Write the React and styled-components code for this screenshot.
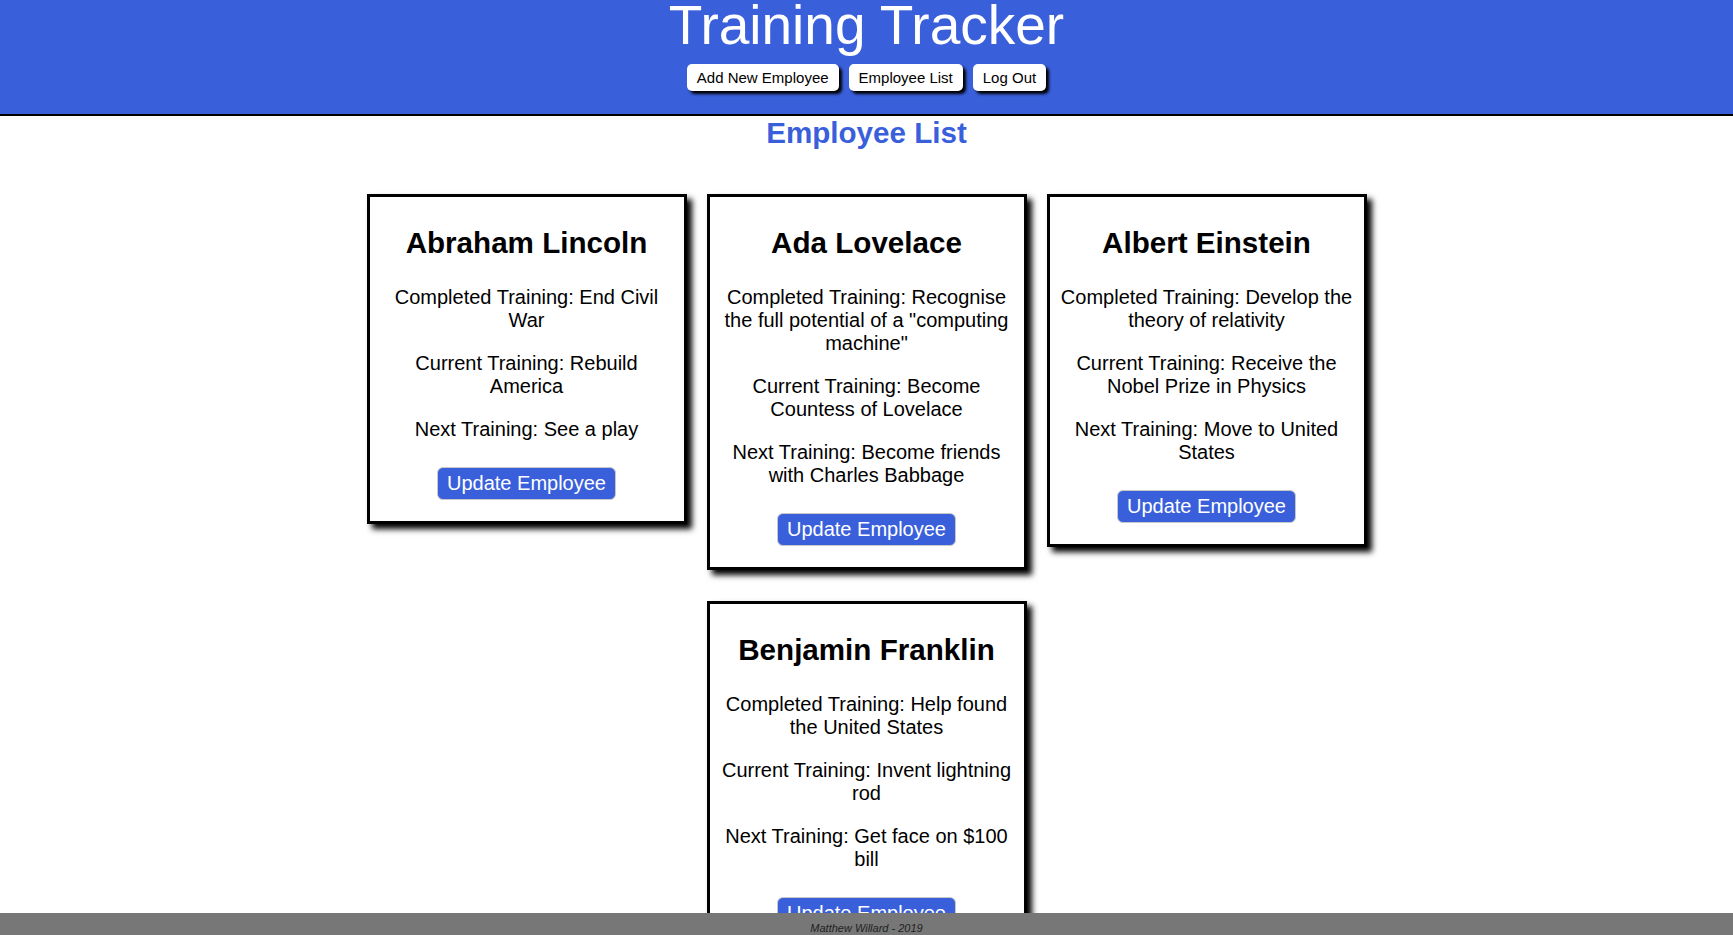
import React from "react"
import styled, { createGlobalStyle } from "styled-components"

const blue = "#3a5fdb"

const GlobalStyle = createGlobalStyle`
  html {
    scrollbar-width: none;
  }
  html::-webkit-scrollbar,
  body::-webkit-scrollbar {
    display: none;
  }
  body {
    margin: 0;
    background: #fff;
    color: #000;
    font-family: "Liberation Sans", Arial, Helvetica, sans-serif;
    -webkit-font-smoothing: antialiased;
  }
`

const Header = styled.header`
  background: ${blue};
  border-bottom: 2px solid #000;
  padding-bottom: 23px;
  text-align: center;
`

const Title = styled.h1`
  margin: 0;
  color: #fff;
  font-size: 55px;
  font-weight: normal;
  line-height: 50px;
`

const Nav = styled.nav`
  display: flex;
  justify-content: center;
  gap: 10px;
  margin-top: 14px;
`

const NavButton = styled.button`
  height: 27px;
  padding: 0 10px;
  border: none;
  border-radius: 5px;
  background: #fff;
  color: #000;
  font-family: inherit;
  font-size: 15px;
  box-shadow: 3px 3px 3px #000;
  cursor: pointer;
`

const PageTitle = styled.h2`
  margin: 0;
  color: ${blue};
  font-size: 29.6px;
  line-height: 34px;
  font-weight: bold;
  text-align: center;
`

const CardList = styled.main`
  display: flex;
  flex-wrap: wrap;
  justify-content: center;
  align-items: flex-start;
  max-width: 1020px;
  margin: 0 auto;
  padding: 29px 0 60px;
`

const Card = styled.section`
  box-sizing: border-box;
  width: 320px;
  margin: 15px 10px 16px;
  padding: 29px 10px 21px;
  border: 3px solid #000;
  background: #fff;
  box-shadow: 5px 5px 6px #000;
  display: flex;
  flex-direction: column;
  align-items: center;
  text-align: center;
`

const Name = styled.h3`
  margin: 0 0 26px;
  font-size: 29.6px;
  line-height: 34px;
  font-weight: bold;
`

const Detail = styled.p`
  margin: 0 0 20px;
  font-size: 20px;
  line-height: 23px;
`

const UpdateButton = styled.button`
  margin-top: 6px;
  padding: 4px 9px;
  border: 1px solid #c8c8c8;
  border-radius: 6px;
  background: ${blue};
  color: #fff;
  font-family: inherit;
  font-size: 20px;
  line-height: 23px;
  cursor: pointer;
`

const Footer = styled.footer`
  position: fixed;
  left: 0;
  right: 0;
  bottom: 0;
  box-sizing: border-box;
  height: 22px;
  padding-top: 9px;
  overflow: hidden;
  background: #777;
  color: #222;
  font-size: 11px;
  font-style: italic;
  line-height: 13px;
  text-align: center;
`

const employees = [
  {
    name: "Abraham Lincoln",
    completed: "End Civil War",
    current: "Rebuild America",
    next: "See a play",
  },
  {
    name: "Ada Lovelace",
    completed: 'Recognise the full potential of a "computing machine"',
    current: "Become Countess of Lovelace",
    next: "Become friends with Charles Babbage",
  },
  {
    name: "Albert Einstein",
    completed: "Develop the theory of relativity",
    current: "Receive the Nobel Prize in Physics",
    next: "Move to United States",
  },
  {
    name: "Benjamin Franklin",
    completed: "Help found the United States",
    current: "Invent lightning rod",
    next: "Get face on $100 bill",
  },
]

const EmployeeCard = ({ employee }) => (
  <Card>
    <Name>{employee.name}</Name>
    <Detail>Completed Training: {employee.completed}</Detail>
    <Detail>Current Training: {employee.current}</Detail>
    <Detail>Next Training: {employee.next}</Detail>
    <UpdateButton>Update Employee</UpdateButton>
  </Card>
)

const App = () => (
  <>
    <GlobalStyle />
    <Header>
      <Title>Training Tracker</Title>
      <Nav>
        <NavButton>Add New Employee</NavButton>
        <NavButton>Employee List</NavButton>
        <NavButton>Log Out</NavButton>
      </Nav>
    </Header>
    <PageTitle>Employee List</PageTitle>
    <CardList>
      {employees.map(e => (
        <EmployeeCard key={e.name} employee={e} />
      ))}
    </CardList>
    <Footer>Matthew Willard - 2019</Footer>
  </>
)

export default App
